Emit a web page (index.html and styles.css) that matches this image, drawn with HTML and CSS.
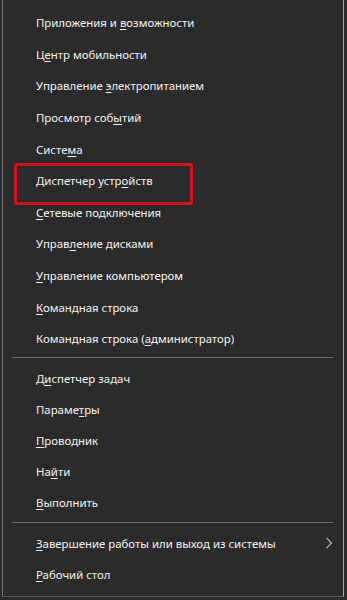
FILE: index.html
```html
<!DOCTYPE html>
<html lang="ru">
<head>
<meta charset="UTF-8">
<meta name="viewport" content="width=device-width, initial-scale=1.0">
<title>Меню Win+X</title>
<link rel="stylesheet" href="styles.css">
</head>
<body>
<div class="menu">
  <ul class="group">
    <li class="item"><span>Приложения и <u>в</u>озможности</span></li>
    <li class="item"><span>Ц<u>е</u>нтр мобильности</span></li>
    <li class="item"><span>Управление <u>э</u>лектропитанием</span></li>
    <li class="item"><span>Просмотр соб<u>ы</u>тий</span></li>
    <li class="item"><span>Систе<u>м</u>а</span></li>
    <li class="item marked"><span>Диспетчер устр<u>о</u>йств</span></li>
    <li class="item"><span><u>С</u>етевые подключения</span></li>
    <li class="item"><span>Управ<u>л</u>ение дисками</span></li>
    <li class="item"><span><u>У</u>правление компьютером</span></li>
    <li class="item"><span><u>К</u>омандная строка</span></li>
    <li class="item"><span>Командная строка (<u>а</u>дминистратор)</span></li>
  </ul>
  <div class="separator"></div>
  <ul class="group short">
    <li class="item"><span>Д<u>и</u>спетчер задач</span></li>
    <li class="item"><span>Параме<u>т</u>ры</span></li>
    <li class="item"><span><u>П</u>роводник</span></li>
    <li class="item"><span>На<u>й</u>ти</span></li>
    <li class="item"><span><u>В</u>ыполнить</span></li>
  </ul>
  <div class="separator lower"></div>
  <ul class="group short">
    <li class="item has-sub">
      <span><u>З</u>авершение работы или выход из системы</span>
      <svg class="chevron" width="8" height="12" viewBox="0 0 8 12"><path d="M1.5 1 L6.5 6 L1.5 11" fill="none" stroke="#b4b4b4" stroke-width="1.2"/></svg>
    </li>
    <li class="item"><span><u>Р</u>абочий стол</span></li>
  </ul>
</div>
</body>
</html>
```

FILE: styles.css
```css
body {
  margin: 0;
  padding: 0;
  background-color: #2b2b2b;
  font-family: "Noto Sans", "Open Sans", sans-serif;
}

.menu {
  margin-left: 2px;
  width: 342px;
  height: 597px;
  box-sizing: border-box;
  border-left: 1px solid #7a7a7a;
  border-right: 1px solid #a8a8a8;
  border-bottom: 1px solid #5a5a5a;
  background-color: #2b2b2b;
  padding-top: 7px;
}

.group {
  list-style: none;
  margin: 0;
  padding: 0;
}

.item {
  height: 31.6px;
  display: flex;
  align-items: center;
  padding-left: 33px;
  padding-right: 10px;
  font-size: 11.4px;
  color: #f4f4f4;
  box-sizing: border-box;
  white-space: nowrap;
}

.short .item {
  height: 31px;
}

.item u {
  text-decoration-thickness: 1px;
  text-underline-offset: 2px;
}

.has-sub {
  justify-content: space-between;
}

.chevron {
  display: block;
}

/* red frame from the screenshot */
.marked {
  position: relative;
}
.marked::after {
  content: "";
  position: absolute;
  left: 11px;
  top: -2px;
  width: 179px;
  height: 42px;
  box-sizing: border-box;
  border: 3px solid #d4141c;
  border-radius: 2px;
}

.separator {
  height: 1px;
  margin: 2px 10px 5px 9px;
  background-color: #6e6e6e;
}
.separator.lower {
  margin-top: 4px;
}
```
